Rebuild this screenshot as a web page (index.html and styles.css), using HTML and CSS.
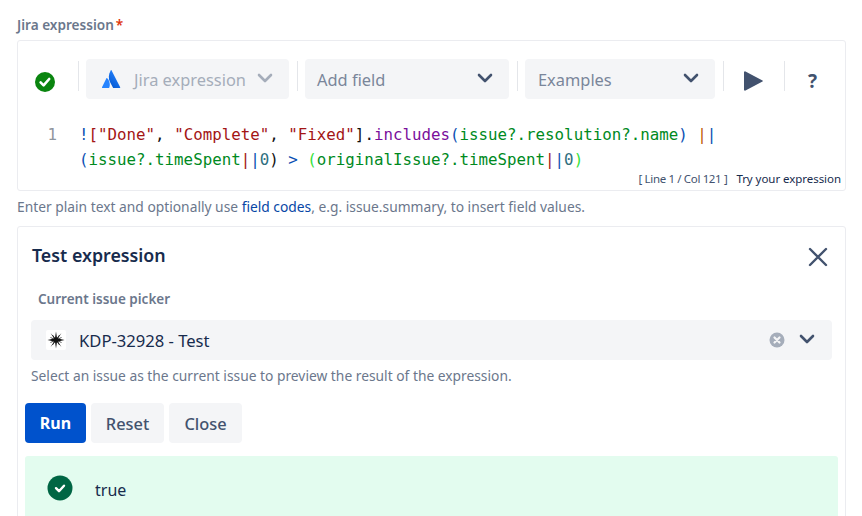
FILE: index.html
```html
<!DOCTYPE html>
<html lang="en">
<head>
<meta charset="utf-8">
<title>Jira expression</title>
<link rel="stylesheet" href="styles.css">
</head>
<body>
<div class="page">
  <div class="field-label">Jira expression<span class="req">*</span></div>
  <section class="editor">
    <div class="toolbar">
      <svg class="status-icon" width="20" height="20" viewBox="0 0 20 20"><circle cx="10" cy="10" r="10" fill="#0a850f"/><path d="M5.6 10.4l3 3 5.6-6.4" fill="none" stroke="#fff" stroke-width="2.6" stroke-linecap="round" stroke-linejoin="round"/></svg>
      <span class="sep sep-first"></span>
      <div class="select select-jira">
        <svg class="logo" width="19" height="18" viewBox="0 0 19 18"><defs><linearGradient id="g" x1="0" y1="1" x2="0.6" y2="0"><stop offset="0" stop-color="#0052cc"/><stop offset="1" stop-color="#2684ff"/></linearGradient></defs><path d="M5.2 8.2c-.3-.3-.6-.3-.8.1L0 17.2c-.2.4 0 .8.5.8h6.2c.2 0 .4-.1.5-.3 1.300-2.800.5-7.100-2-9.500z" fill="#2684ff"/><path d="M8.700.4C6.300 4.300 6.400 8.600 8 12l3 5.700c.1.200.3.300.5.300h6.200c.5 0 .7-.4.500-.8L9.600.4c-.2-.4-.7-.4-.9 0z" fill="url(#g)"/></svg>
        <span class="select-text muted">Jira expression</span>
        <svg class="chev" width="16" height="10" viewBox="0 0 16 10"><path d="M2 2l6 6 6-6" fill="none" stroke="#a5adba" stroke-width="2.600" stroke-linecap="round" stroke-linejoin="round"/></svg>
      </div>
      <span class="sep"></span>
      <div class="select select-field">
        <span class="select-text">Add field</span>
        <svg class="chev chev-end" width="16" height="10" viewBox="0 0 16 10"><path d="M2 2l6 6 6-6" fill="none" stroke="#42526e" stroke-width="2.600" stroke-linecap="round" stroke-linejoin="round"/></svg>
      </div>
      <span class="sep"></span>
      <div class="select select-examples">
        <span class="select-text">Examples</span>
        <svg class="chev chev-end" width="16" height="10" viewBox="0 0 16 10"><path d="M2 2l6 6 6-6" fill="none" stroke="#42526e" stroke-width="2.600" stroke-linecap="round" stroke-linejoin="round"/></svg>
      </div>
      <span class="sep"></span>
      <svg class="play" width="19" height="20" viewBox="0 0 19 20"><path d="M1.500 0.500L18.500 9.500a.6.600 0 0 1 0 1L1.500 19.500a1 1 0 0 1-1.500-.9V1.400a1 1 0 0 1 1.500-.9z" fill="#42526e"/></svg>
      <span class="sep sep-help"></span>
      <span class="help-mark">?</span>
    </div>
    <div class="code">
      <div class="gutter">1</div>
      <div class="code-text"><span class="bl">!</span><span class="br">[</span><span class="str">"Done"</span><span class="bk">, </span><span class="str">"Complete"</span><span class="bk">, </span><span class="str">"Fixed"</span><span class="bk">]</span><span class="bk">.</span><span class="fn">includes</span><span class="bl">(</span><span class="var">issue?.resolution?.name</span><span class="bl">)</span> <span class="or">|</span><span class="bl">|</span><br><span class="bl">(</span><span class="var">issue?.timeSpent</span><span class="br">|</span><span class="bl">|</span><span class="num">0</span><span class="bk">)</span> <span class="bl">&gt;</span> <span class="lime">(</span><span class="var">originalIssue?.timeSpent</span><span class="br">|</span><span class="bl">|</span><span class="num">0</span><span class="lime">)</span></div>
    </div>
    <div class="status-bar"><span class="pos">[ Line 1 / Col 121 ]</span><span class="try">Try your expression</span></div>
  </section>
  <p class="help help-top">Enter plain text and optionally use <a class="link">field codes</a>, e.g. issue.summary, to insert field values.</p>
  <section class="panel">
    <div class="panel-head">
      <h2 class="panel-title">Test expression</h2>
      <svg class="close-x" width="20" height="20" viewBox="0 0 20 20"><path d="M2 2l16 16M18 2L2 18" stroke="#42526e" stroke-width="2.400" stroke-linecap="round"/></svg>
    </div>
    <div class="picker-label">Current issue picker</div>
    <div class="picker">
      <span class="issue-icon"><svg width="20" height="20" viewBox="0 0 20 20"><path d="M10 1.500L11 8 15.500 3 12 8.500 18.500 10 12 11.500 15.500 17 11 12 10 18.500 9 12 4.500 17 8 11.500 1.500 10 8 8.500 4.500 3 9 8z" fill="#111"/><path d="M6.500 5l7 10M13.500 5l-7 10M4.500 7.500l11 5M15.500 7.500l-11 5" stroke="#111" stroke-width=".7"/></svg></span>
      <span class="picker-text">KDP-32928 - Test</span>
      <svg class="clear" width="16" height="16" viewBox="0 0 16 16"><circle cx="8" cy="8" r="7.500" fill="#a5adba"/><path d="M5.500 5.500l5 5M10.500 5.500l-5 5" stroke="#f4f5f7" stroke-width="2.200" stroke-linecap="round"/></svg>
      <svg class="picker-chev" width="16" height="10" viewBox="0 0 16 10"><path d="M2 2l6 6 6-6" fill="none" stroke="#42526e" stroke-width="2.600" stroke-linecap="round" stroke-linejoin="round"/></svg>
    </div>
    <p class="help help-picker">Select an issue as the current issue to preview the result of the expression.</p>
    <div class="actions">
      <button class="btn btn-primary">Run</button>
      <button class="btn btn-reset">Reset</button>
      <button class="btn btn-close">Close</button>
    </div>
    <div class="result">
      <svg class="result-icon" width="26" height="26" viewBox="0 0 26 26"><circle cx="13" cy="13" r="12.500" fill="#006644"/><path d="M9 13.200l3 3 5-5.500" fill="none" stroke="#fff" stroke-width="2.400" stroke-linecap="round" stroke-linejoin="round"/></svg>
      <span class="result-text">true</span>
    </div>
  </section>
</div>
</body>
</html>
```
FILE: styles.css
```css
* { box-sizing: border-box; }
html, body { margin: 0; height: 100%; overflow: hidden; background: #fff; }
body { font-family: "Noto Sans", "Open Sans", sans-serif; color: #172b4d; }
.page { padding: 15px 16px 0 17px; width: 862px; height: 516px; overflow: hidden; }
.field-label { font-size: 13.600px; font-weight: 600; color: #6b778c; line-height: 20px; height: 25px; }
.req { color: #de350b; margin-left: 2px; }
.editor { height: 151px; border: 1px solid #ebecf0; border-radius: 3px; position: relative; }
.toolbar { display: flex; align-items: flex-start; padding: 18px 0 0 17px; height: 68px; }
.status-icon { margin-top: 13px; flex: none; }
.sep { width: 1px; height: 30px; background: #e4e6ea; margin: 2px 7px 0 8px; flex: none; }
.sep-first { margin-left: 23px; }
.select { height: 40px; background: #f4f5f7; border-radius: 4px; display: flex; align-items: center; flex: none; }
.select-text { font-size: 16.400px; color: #7a869a; line-height: 40px; margin-top: 1px; }
.select-text.muted { color: #a5adba; }
.select-jira { width: 203px; padding-left: 16px; }
.logo { margin-right: 13px; flex: none; }
.select-jira .chev { margin-left: 11px; margin-top: -3px; }
.select-field { width: 204px; padding-left: 12px; }
.select-examples { width: 190px; padding-left: 13px; }
.chev-end { margin-left: auto; margin-right: 16px; margin-top: -3px; }
.play { margin: 12px 0 0 13px; flex: none; }
.sep-help { margin-left: 21px; margin-right: 0; }
.help-mark { font-size: 19px; font-weight: 700; color: #42526e; margin: 9px 0 0 23px; line-height: 26px; }
.code { display: flex; font-family: "DejaVu Sans Mono", monospace; font-size: 15.800px; line-height: 25px; height: 50px; margin-top: 13px; }
.gutter { width: 61px; text-align: right; padding-right: 22px; color: #8f959e; flex: none; }
.code-text { white-space: nowrap; color: #000; }
.bl { color: #0b4fb3; }
.br { color: #a31515; }
.bk { color: #111; }
.str { color: #a31515; }
.fn { color: #7a0f9c; }
.var { color: #008a1e; }
.or { color: #c25a00; }
.num { color: #2f6f7f; }
.lime { color: #33e23a; }
.status-bar { position: absolute; right: 4px; bottom: 3px; display: flex; font-size: 11.500px; line-height: 16px; }
.pos { color: #42526e; margin-right: 9px; letter-spacing: -0.350px; }
.try { color: #172b4d; letter-spacing: -0.050px; }
.help { margin: 0; font-size: 13.800px; line-height: 20px; color: #6b778c; }
.help-top { margin-top: 6px; height: 29px; }
.link { color: #0747a6; }
.panel { height: 320px; border: 1px solid #ebecf0; border-radius: 3px; padding: 0 7px; }
.panel-head { display: flex; align-items: flex-start; justify-content: space-between; padding: 16px 10px 0 7px; height: 50px; }
.panel-title { margin: 0; font-size: 17.800px; font-weight: 600; line-height: 24px; color: #172b4d; }
.close-x { margin-top: 4px; flex: none; }
.picker-label { font-size: 13.500px; font-weight: 600; color: #6b778c; line-height: 20px; padding: 12px 0 0 13px; height: 43px; }
.picker { height: 40px; margin-left: 6px; width: 801px; background: #f4f5f7; border-radius: 4px; display: flex; align-items: center; padding-left: 15px; }
.issue-icon { width: 20px; height: 20px; background: #fff; border-radius: 2px; flex: none; display: flex; }
.picker-text { font-size: 16.600px; margin-left: 13px; color: #172b4d; }
.clear { margin-left: auto; flex: none; }
.picker-chev { margin: -2px 17px 0 14px; flex: none; }
.help-picker { margin: 6px 0 0 6px; height: 37px; }
.actions { display: flex; gap: 5px; height: 40px; }
.btn { height: 40px; border: 0; border-radius: 4px; font-family: inherit; font-size: 16.400px; font-weight: 500; padding: 0; background: #f4f5f7; color: #42526e; }
.btn-primary { width: 61px; background: #0052cc; color: #fff; font-weight: 700; font-size: 16px; }
.btn-reset, .btn-close { width: 73px; }
.result { margin-top: 13px; width: 813px; height: 80px; background: #e3fcef; border-radius: 3px 3px 0 0; display: flex; align-items: flex-start; padding: 19px 0 0 22px; }
.result-text { font-size: 16px; margin: 4px 0 0 22px; color: #172b4d; }
```
